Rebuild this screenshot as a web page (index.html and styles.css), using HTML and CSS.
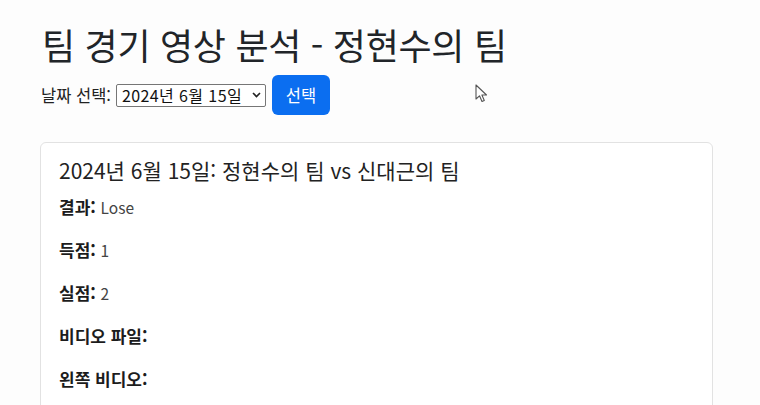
FILE: index.html
```html
<!DOCTYPE html>
<html lang="ko">
<head>
<meta charset="utf-8">
<link rel="stylesheet" href="styles.css">
</head>
<body>
<div class="container">
  <h1 class="title">팀 경기 영상 분석 - 정현수의 팀</h1>
  <form class="date-form">
    <label class="date-label">날짜 선택:</label>
    <div class="select-box">
      <span class="select-text">2024년 6월 15일</span>
      <svg class="chev" width="9" height="6" viewBox="0 0 9 6"><path d="M1 1 L4.5 4.5 L8 1" fill="none" stroke="#222" stroke-width="1.6"/></svg>
    </div>
    <button type="button" class="btn">선택</button>
  </form>
  <div class="card">
    <h5 class="card-title">2024년 6월 15일: 정현수의 팀 vs 신대근의 팀</h5>
    <p class="row"><strong>결과:</strong> <span class="val">Lose</span></p>
    <p class="row"><strong>득점:</strong> <span class="val">1</span></p>
    <p class="row"><strong>실점:</strong> <span class="val">2</span></p>
    <p class="row"><strong>비디오 파일:</strong></p>
    <p class="row"><strong>왼쪽 비디오:</strong></p>
  </div>
</div>
<svg class="cursor" width="14" height="20" viewBox="0 0 14 20"><path d="M1 1 L1 15 L4.5 11.8 L7 17.5 L9.3 16.5 L6.9 11 L11.5 11 Z" fill="#fff" stroke="#555" stroke-width="1.1" stroke-linejoin="round"/></svg>
</body>
</html>
```
FILE: styles.css
```css
html, body {
  margin: 0;
  padding: 0;
  background: #fdfdfd;
  font-family: "Noto Sans CJK KR", "Noto Sans", sans-serif;
  color: #212529;
}
.container {
  padding: 19px 47px 0 40px;
}
.title {
  margin: 0 0 0 2px;
  font-size: 36px;
  font-weight: 400;
  line-height: 50px;
  letter-spacing: -0.3px;
}
.date-form {
  display: flex;
  align-items: center;
  gap: 5px;
  margin-top: 6px;
  height: 40px;
}
.date-label {
  font-size: 16.5px;
  color: #222;
  padding-left: 1px;
}
.select-box {
  display: flex;
  align-items: center;
  justify-content: space-between;
  height: 21px;
  border: 1px solid #767676;
  border-radius: 2px;
  padding: 0 4px 0 5px;
  width: 139px;
  background: #fff;
}
.select-text {
  font-size: 16px;
  line-height: 21px;
  letter-spacing: 0.4px;
  color: #111;
}
.btn {
  width: 58px;
  height: 40px;
  margin-left: 1px;
  border: none;
  border-radius: 6px;
  background: #0b6ef0;
  color: #fff;
  font-family: "Noto Sans CJK KR", sans-serif;
  font-size: 16.5px;
}
.card {
  margin-top: 27px;
  border: 1px solid #e2e2e2;
  border-radius: 6px;
  padding: 12px 18px 0;
  height: 280px;
  background: #fff;
}
.card-title {
  margin: 0 0 10px;
  font-size: 21px;
  font-weight: 400;
  line-height: 30px;
  color: #222;
}
.row {
  margin: 0 0 19px;
  font-size: 17px;
  line-height: 24px;
}
.row strong {
  font-weight: 700;
  color: #1c1c1c;
}
.val {
  color: #444;
  font-weight: 400;
  font-size: 15.5px;
}
.cursor {
  position: absolute;
  left: 475px;
  top: 84px;
}
```
